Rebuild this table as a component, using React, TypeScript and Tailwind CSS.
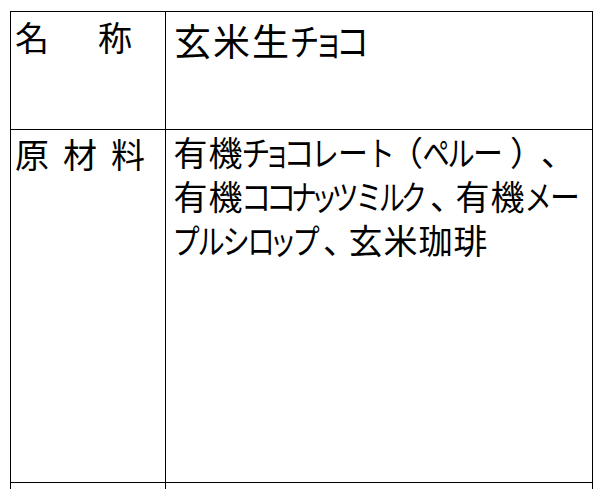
import React from "react";

const font = { fontFamily: '"Noto Sans CJK JP", "Noto Sans", sans-serif' };

type G = { ch: string; w: string; inner?: string };

// Each glyph sits in a box of its own width (proportional kana like the reference font)
function Glyph({ g }: { g: G }) {
  return (
    <span className={`inline-flex justify-center ${g.w}`}>
      <span className={`inline-block whitespace-nowrap ${g.inner ?? ""}`}>{g.ch}</span>
    </span>
  );
}

const K = "w-[35px]";
const kana = "scale-x-[0.8]";

const line1: G[] = [
  { ch: "有", w: K },
  { ch: "機", w: K },
  { ch: "チ", w: "w-[26px]", inner: "scale-x-[0.85]" },
  { ch: "ョ", w: "w-[16px]", inner: "scale-x-[0.75]" },
  { ch: "コ", w: "w-[27px]", inner: "scale-x-[0.92]" },
  { ch: "レ", w: "w-[26px]", inner: kana },
  { ch: "ー", w: "w-[30px]", inner: "scale-x-[0.88]" },
  { ch: "ト", w: "w-[26px]", inner: kana },
  { ch: "（", w: "w-[29px] !justify-end" },
  { ch: "ペ", w: "w-[25px]", inner: kana },
  { ch: "ル", w: "w-[25px]", inner: kana },
  { ch: "ー", w: "w-[30px]", inner: "scale-x-[0.88]" },
  { ch: "）", w: "w-[36px] !justify-start pl-[7px]" },
  { ch: "、", w: "w-[30px] !justify-start pl-[2px]" },
];

const line2: G[] = [
  { ch: "有", w: K },
  { ch: "機", w: K },
  { ch: "コ", w: "w-[25px]", inner: "scale-x-[0.9]" },
  { ch: "コ", w: "w-[25px]", inner: "scale-x-[0.9]" },
  { ch: "ナ", w: "w-[22px]", inner: "scale-x-[0.75]" },
  { ch: "ッ", w: "w-[18px]", inner: kana },
  { ch: "ツ", w: "w-[24px]", inner: kana },
  { ch: "ミ", w: "w-[23px]", inner: "scale-x-[0.78]" },
  { ch: "ル", w: "w-[23px]", inner: "scale-x-[0.76]" },
  { ch: "ク", w: "w-[22px]", inner: "scale-x-[0.76]" },
  { ch: "、", w: "w-[30px] !justify-start pl-[5px]" },
  { ch: "有", w: K },
  { ch: "機", w: K },
  { ch: "メ", w: "w-[25px]", inner: kana },
  { ch: "ー", w: "w-[30px]", inner: "scale-x-[0.88]" },
];

const line3: G[] = [
  { ch: "プ", w: "w-[25px]", inner: kana },
  { ch: "ル", w: "w-[25px]", inner: kana },
  { ch: "シ", w: "w-[25px]", inner: kana },
  { ch: "ロ", w: "w-[25px]", inner: kana },
  { ch: "ッ", w: "w-[20px]", inner: kana },
  { ch: "プ", w: "w-[25px]", inner: kana },
  { ch: "、", w: "w-[30px] !justify-start pl-[5px]" },
  { ch: "玄", w: K },
  { ch: "米", w: K },
  { ch: "珈", w: K },
  { ch: "琲", w: K },
];

const title: G[] = [
  { ch: "玄", w: "w-[39px]" },
  { ch: "米", w: "w-[39px]" },
  { ch: "生", w: "w-[39px]" },
  { ch: "チ", w: "w-[28px]", inner: "scale-x-[0.8]" },
  { ch: "ョ", w: "w-[21px]", inner: "scale-x-[0.8]" },
  { ch: "コ", w: "w-[27px]", inner: "scale-x-[0.9]" },
];

function Row({ glyphs }: { glyphs: G[] }) {
  return (
    <div className="flex whitespace-nowrap">
      {glyphs.map((g, i) => (
        <Glyph key={i} g={g} />
      ))}
    </div>
  );
}

export default function App() {
  return (
    <div className="w-[601px] h-[489px] overflow-hidden bg-white text-black" style={font}>
      <div className="ml-[10px] mt-[11px] w-[583px] border-l border-t border-black">
        <div className="flex">
          <div className="w-[155px] h-[118px] border-r border-b border-black pl-[4px] pt-[3px]">
            <div className="flex gap-[49px] text-[34px] leading-[44px]">
              <span>名</span>
              <span>称</span>
            </div>
          </div>
          <div className="w-[427px] h-[118px] border-r border-b border-black pl-[7px] pt-[6px]">
            <div className="text-[37px] leading-[44px]">
              <Row glyphs={title} />
            </div>
          </div>
        </div>
        <div className="flex">
          <div className="w-[155px] h-[353px] border-r border-b border-black pl-[4px] pt-[2px]">
            <div className="flex gap-[14px] text-[34px] leading-[44px]">
              <span>原</span>
              <span>材</span>
              <span>料</span>
            </div>
          </div>
          <div className="w-[427px] h-[353px] border-r border-b border-black pl-[7px] pt-0">
            <div className="text-[34px] leading-[44px]">
              <Row glyphs={line1} />
              <Row glyphs={line2} />
              <Row glyphs={line3} />
            </div>
          </div>
        </div>
        <div className="flex">
          <div className="w-[155px] h-[100px] border-r border-b border-black"></div>
          <div className="w-[427px] h-[100px] border-r border-b border-black"></div>
        </div>
      </div>
    </div>
  );
}
